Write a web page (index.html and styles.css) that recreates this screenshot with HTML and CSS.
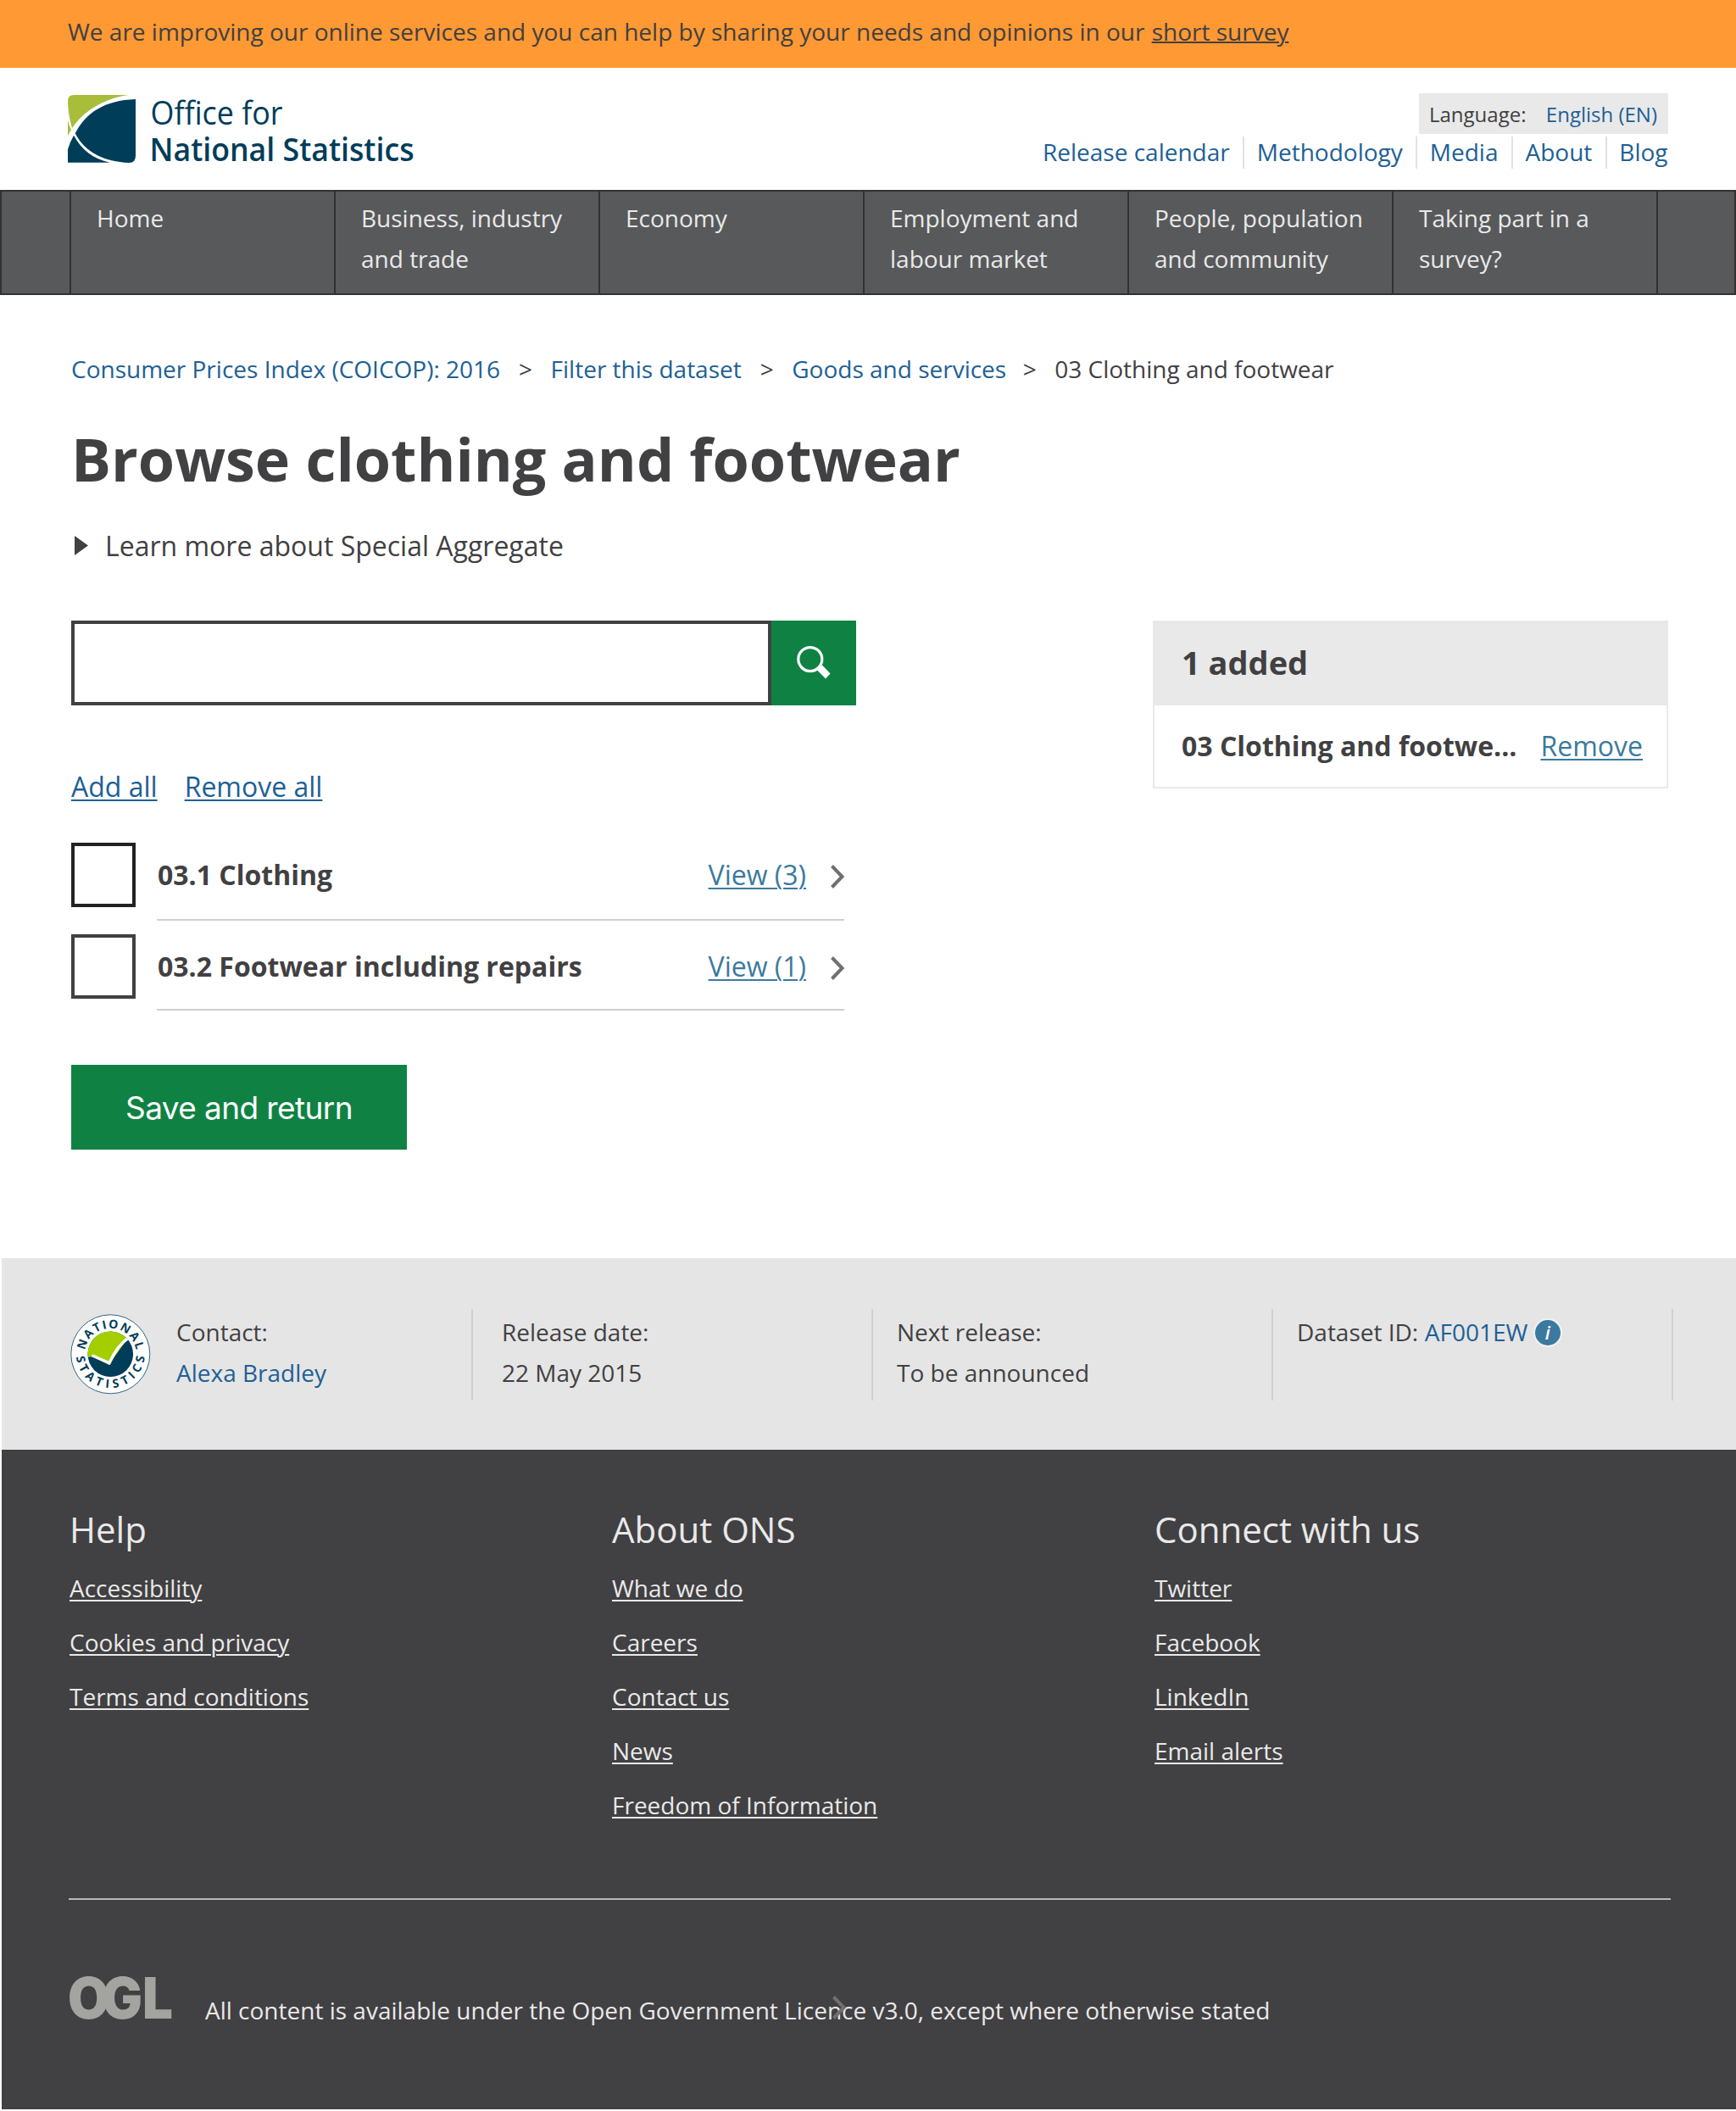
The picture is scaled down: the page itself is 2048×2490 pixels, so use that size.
FILE: index.html
```html
<!DOCTYPE html>
<html lang="en">
<head>
<meta charset="utf-8">
<title>Browse clothing and footwear - Office for National Statistics</title>
<link rel="stylesheet" href="styles.css">
</head>
<body>
<div class="banner">We are improving our online services and you can help by sharing your needs and opinions in our <a href="#">short survey</a></div>

<header class="header">
  <svg class="logo" width="420" height="100" viewBox="0 0 420 100" role="img">
    <g transform="scale(.3347)">
      <path fill="#a8bd3a" d="M0 22Q0 0 22 0H213C120 14 52 62 15 117C6 84 1 60 0 22Z"/>
      <path fill="#a8bd3a" d="M0 88Q4 108 12 123Q5 134 0 144Z"/>
      <path fill="#003d59" d="M239 15V214Q239 239 216 239C128 234 62 205 26 135C64 62 130 19 239 15Z"/>
      <path fill="#003d59" d="M0 192Q8 165 21 143C48 194 90 226 148 238H0Z"/>
    </g>
    <text class="logo-light" x="97.5" y="35" textLength="156" lengthAdjust="spacingAndGlyphs">Office for</text>
    <text class="logo-bold" x="96.5" y="78" textLength="312" lengthAdjust="spacingAndGlyphs">National Statistics</text>
  </svg>
  <div class="header-right">
    <div class="language"><span>Language:</span><a href="#">English (EN)</a></div>
    <nav class="secondary">
      <a href="#">Release calendar</a><a href="#">Methodology</a><a href="#">Media</a><a href="#">About</a><a href="#">Blog</a>
    </nav>
  </div>
</header>

<nav class="primary">
  <a href="#">Home</a>
  <a href="#">Business, industry<br>and trade</a>
  <a href="#">Economy</a>
  <a href="#">Employment and<br>labour market</a>
  <a href="#">People, population<br>and community</a>
  <a href="#">Taking part in a<br>survey?</a>
</nav>

<main class="main">
  <div class="breadcrumb">
    <a href="#">Consumer Prices Index (COICOP): 2016</a><span class="sep">&gt;</span><a href="#">Filter this dataset</a><span class="sep">&gt;</span><a href="#">Goods and services</a><span class="sep last">&gt;</span><span>03 Clothing and footwear</span>
  </div>
  <h1>Browse clothing and footwear</h1>
  <div class="learn">
    <svg width="16" height="23" viewBox="0 0 16 23"><path fill="#414042" d="M0 0L16 11.5L0 23Z"/></svg>
    <span>Learn more about Special Aggregate</span>
  </div>
  <div class="columns">
    <section class="browse">
      <form class="search">
        <input type="text" aria-label="Search">
        <button type="button" aria-label="Search">
          <svg width="40" height="39" viewBox="0 0 40 39"><circle cx="15.8" cy="15.6" r="14" fill="none" stroke="#fff" stroke-width="3.2"/><path fill="#fff" d="M30 22.5L39.5 32.5L34 38.5L24 28.5Z"/></svg>
        </button>
      </form>
      <div class="bulk"><a href="#">Add all</a><a href="#">Remove all</a></div>
      <div class="item">
        <span class="box focused"></span>
        <div class="item-body">
          <b>03.1 Clothing</b><a href="#">View (3)</a>
          <svg width="16" height="28" viewBox="0 0 16 28"><path d="M1.5 1.5L13.5 14L1.5 26.5"/></svg>
        </div>
      </div>
      <div class="item second">
        <span class="box"></span>
        <div class="item-body">
          <b>03.2 Footwear including repairs</b><a href="#">View (1)</a>
          <svg width="16" height="28" viewBox="0 0 16 28"><path d="M1.5 1.5L13.5 14L1.5 26.5"/></svg>
        </div>
      </div>
      <button type="button" class="save">Save and return</button>
    </section>
    <aside class="added">
      <h2>1 added</h2>
      <div class="added-row"><b>03 Clothing and footwe...</b><a href="#">Remove</a></div>
    </aside>
  </div>
</main>

<section class="meta">
  <div class="meta-cell first">
    <svg class="badge" width="95" height="95" viewBox="0 0 95 95">
      <defs>
        <clipPath id="disc"><circle cx="47.3" cy="47.3" r="26.8"/></clipPath>
        <path id="top" d="M17.1 51.5A30.5 30.5 0 1 1 77.5 51.5"/>
        <path id="bottom" d="M6.6 46.5A40.7 40.7 0 0 0 88 46.5"/>
      </defs>
      <circle cx="47.3" cy="47.3" r="46.5" fill="#fff" stroke="#2f6680" stroke-width="1"/>
      <g clip-path="url(#disc)">
        <rect x="20" y="20" width="55" height="55" fill="#003d59"/>
        <path fill="#a5ce00" d="M20 20V51L27 50L45.5 60L68 28L75 20Z"/>
        <path fill="none" stroke="#fff" stroke-width="3.4" d="M25.5 48.8L46 57.8Q55 37 70 27"/>
      </g>
      <g class="badge-text">
        <text><textPath href="#top" startOffset="9" textLength="86">NATIONAL</textPath></text>
        <text><textPath href="#bottom" startOffset="4" textLength="120">STATISTICS</textPath></text>
      </g>
    </svg>
    <p>Contact:<br><a href="#">Alexa Bradley</a></p>
  </div>
  <div class="meta-cell second-cell"><p>Release date:<br>22 May 2015</p></div>
  <div class="meta-cell"><p>Next release:<br>To be announced</p></div>
  <div class="meta-cell"><p class="dataset"><span>Dataset ID:</span><a href="#">AF001EW</a><i class="info">i</i></p></div>
</section>

<footer class="footer">
  <div class="links">
    <div><h3>Help</h3><ul><li><a href="#">Accessibility</a></li><li><a href="#">Cookies and privacy</a></li><li><a href="#">Terms and conditions</a></li></ul></div>
    <div><h3>About ONS</h3><ul><li><a href="#">What we do</a></li><li><a href="#">Careers</a></li><li><a href="#">Contact us</a></li><li><a href="#">News</a></li><li><a href="#">Freedom of Information</a></li></ul></div>
    <div><h3>Connect with us</h3><ul><li><a href="#">Twitter</a></li><li><a href="#">Facebook</a></li><li><a href="#">LinkedIn</a></li><li><a href="#">Email alerts</a></li></ul></div>
  </div>
  <div class="licence">
    <svg class="ogl" width="124" height="52" viewBox="0 0 124 52"><text transform="scale(.95 1)" x="-2 40 90.5" y="49">OGL</text></svg>
    <p>All content is available under the Open Government Licence v3.0, except where otherwise stated</p>
    <svg class="stray" width="16" height="28" viewBox="0 0 16 28"><path d="M1.5 1.5L13.5 14L1.5 26.5"/></svg>
  </div>
</footer>
</body>
</html>
```
FILE: styles.css
```css
* { box-sizing: border-box; }

body {
  margin: 0;
  background: #fff;
  color: #414042;
  font: 400 28px/48px "Open Sans", sans-serif;
}

h1, h2, h3, p, ul { margin: 0; padding: 0; }
ul { list-style: none; }
svg { display: block; flex: none; overflow: visible; }
a { color: #206095; text-decoration: none; }

.banner {
  height: 80px;
  padding: 13px 80px 0;
  background: #ff9933;
}
.banner a { margin-left: 1px; color: inherit; text-decoration: underline; text-decoration-thickness: 2px; }

/* Header */
.header {
  display: flex;
  justify-content: space-between;
  height: 144px;
  padding: 0 80px;
}
.logo { margin-top: 32px; }
.logo text { font-size: 38px; fill: #003d59; }
.logo-bold { font-weight: 600; }

.header-right {
  display: flex;
  flex-direction: column;
  align-items: flex-end;
  padding-top: 30px;
}
.language {
  display: flex;
  justify-content: space-between;
  width: 294px;
  height: 48px;
  padding: 0 13px 0 12px;
  background: #e9e9e9;
  font-size: 24px;
  line-height: 50px;
}
.secondary {
  display: flex;
  height: 38px;
  margin-top: 3px;
  line-height: 36px;
}
.secondary a { padding: 0 15.5px 0 14.5px; border-right: 2px solid #e2e2e2; }
.secondary a:last-child { padding-right: 0.5px; border: 0; }

.primary {
  display: grid;
  grid-template-columns: repeat(6, 312px);
  height: 124px;
  padding-left: 80px;
  border: 2px solid #323132;
  background: #58595b;
}
.primary a {
  padding: 7px 0 0 30px;
  border-left: 2px solid #323132;
  color: #e9e9e9;
  white-space: nowrap;
}
.primary a:last-child { border-right: 2px solid #323132; width: 314px; }

/* Page content */
.main { padding: 63px 80px 128px 84px; }

.breadcrumb { display: flex; }
.sep { width: 16px; margin: 0 21.5px 0 22px; }
.sep.last { margin-left: 19.5px; }

h1 {
  margin: 34px 0 0;
  font-size: 70px;
  line-height: 96px;
  font-weight: 700;
}

.learn {
  display: flex;
  gap: 20px;
  margin-top: 31px;
  padding-left: 4px;
  font-size: 32px;
}
.learn svg { margin-top: 12px; }

.columns {
  display: flex;
  justify-content: space-between;
  align-items: flex-start;
  margin-top: 64px;
  font-size: 32px;
}
.browse { width: 926px; }

.search { display: flex; height: 100px; }
.search input {
  width: 826px;
  padding: 0 20px;
  border: 4px solid #414042;
  border-radius: 0;
  font: inherit;
}
.search button {
  display: flex;
  align-items: flex-start;
  width: 100px;
  padding: 30px 0 0 30px;
  border: 0;
  background: #0f8243;
}

.bulk { display: flex; gap: 32px; margin: 72px 0 42px; }
.bulk a, .item a, .added a {
  text-decoration: underline;
  text-decoration-thickness: 2px;
  text-underline-offset: 3px;
}

.item { display: flex; height: 92px; }
.item.second { height: 90px; margin-top: 16px; }
.box { width: 76px; height: 76px; border: 4px solid #414042; }
.box.focused { border-color: #222; }
.item-body {
  display: flex;
  width: 811px;
  margin-left: 25px;
  padding: 14px 0 0 1px;
  border-bottom: 2px solid #d0d0d0;
}
.item-body a { margin-left: auto; color: #3b7a9e; }
.item-body svg { margin: 12px 0 0 29px; }
.item-body path, .stray path { fill: none; stroke: #707071; stroke-width: 4; }

.save {
  display: block;
  width: 396px;
  height: 100px;
  margin-top: 64px;
  padding: 1px 0 0;
  border: 0;
  background: #0f8243;
  color: #fff;
  font: 400 37px/99px Inter, sans-serif;
  letter-spacing: -0.6px;
}

.added { width: 608px; height: 198px; border: 2px solid #e9e9e9; }
.added h2 {
  height: 98px;
  padding: 23px 0 0 32px;
  background: #e9e9e9;
  font-size: 38px;
  line-height: 48px;
}
.added-row {
  display: flex;
  justify-content: space-between;
  padding: 24px 28px 0 32px;
}
.added-row a { color: #3b7a9e; }

/* Release details */
.meta {
  display: grid;
  grid-template-columns: 474px 472px 472px 472px;
  height: 226px;
  margin-left: 2px;
  padding: 60px 0 0 82px;
  background: #e5e5e5;
}
.meta-cell {
  height: 108px;
  padding: 3px 0 0 28px;
  border-right: 2px solid #d0d0d0;
}
.meta-cell.first { display: flex; gap: 30px; padding-left: 0; margin-left: -1px; }
.second-cell { padding-left: 34px; }
.badge { margin-top: 3px; }
.badge-text { font-size: 14px; font-weight: 700; fill: #003d59; }
.dataset { display: flex; gap: 7.5px; }
.info {
  width: 34px;
  height: 34px;
  margin: 8px 0 0 -1px;
  border: 2px solid #f2f2f2;
  border-radius: 50%;
  background: #3b7a9e;
  color: #fff;
  font-size: 22px;
  font-weight: 600;
  line-height: 28px;
  text-align: center;
}

/* Footer */
.footer {
  height: 778px;
  margin: 0 0 2px 2px;
  padding: 62px 77px 0 79px;
  background: #414042;
  color: #e9e9e9;
}
.links {
  display: grid;
  grid-template-columns: 640px 640px auto;
  height: 469px;
  padding-left: 1px;
  border-bottom: 2px solid #b8b8b8;
}
h3 { margin-bottom: 5px; font-size: 42px; line-height: 64px; font-weight: 400; }
.links li { line-height: 64px; }
.links a {
  color: inherit;
  text-decoration: underline;
  text-decoration-thickness: 2px;
  text-underline-offset: 3px;
}
.licence { display: flex; position: relative; padding-top: 91px; }
.ogl { margin-left: 1px; }
.ogl text { font: 900 67px Inter, sans-serif; fill: #a3a39f; }
.licence p { margin: 15px 0 0 36px; }
.stray { position: absolute; left: 901px; top: 113px; }
```
